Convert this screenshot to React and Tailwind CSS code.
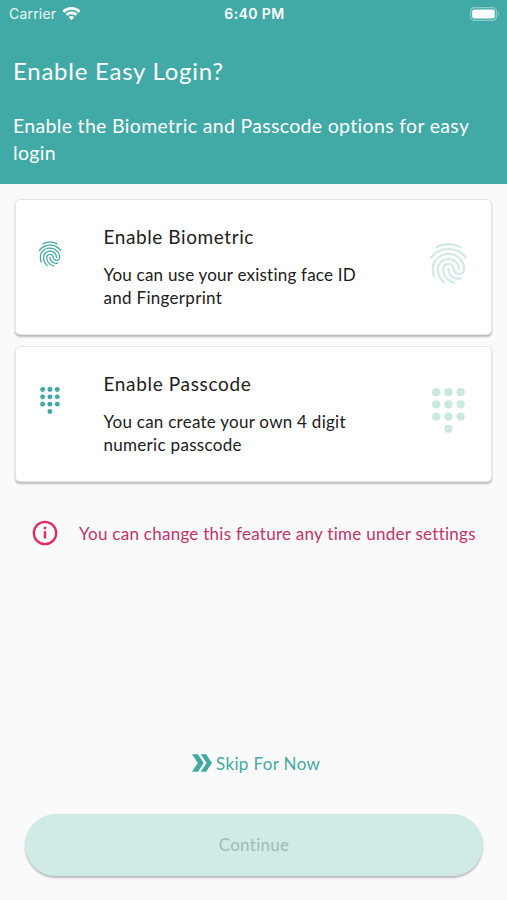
import React from "react";
import { MdFingerprint } from "react-icons/md";

function Wifi() {
  return (
    <svg width="19" height="15" viewBox="0 0 20 15" fill="none" stroke="#fff" strokeWidth="2.8">
      <path d="M1.5 5.6A12 12 0 0 1 18.5 5.6" />
      <path d="M4.8 9A7.4 7.4 0 0 1 15.2 9" />
      <path d="M10 14.5 7.1 11.5A4 4 0 0 1 12.9 11.5Z" fill="#fff" stroke="none" />
    </svg>
  );
}

function Battery() {
  return (
    <svg width="30" height="14" viewBox="0 0 30 14">
      <rect x="0.6" y="0.6" width="25.8" height="12.8" rx="3.6" fill="none" stroke="#fff" strokeOpacity="0.4" strokeWidth="1.2" />
      <rect x="2.2" y="2.4" width="22.6" height="9.2" rx="2" fill="#fff" />
      <path d="M27.8 4.8v4.4c1.6-.8 1.6-3.6 0-4.4Z" fill="#fff" fillOpacity="0.45" />
    </svg>
  );
}

const DOTS = [[0, 0], [1, 0], [2, 0], [0, 1], [1, 1], [2, 1], [0, 2], [1, 2], [2, 2], [1, 3]];

function Keypad({ className }) {
  return (
    <svg className={className} viewBox="0 0 33 45" fill="currentColor">
      {DOTS.map(([x, y]) => (
        <circle key={`${x}-${y}`} cx={4.2 + x * 12.2} cy={4.2 + y * 12.2} r="4.1" />
      ))}
    </svg>
  );
}

function Card({ small, large, title, titleClass, lines }) {
  return (
    <section className="flex h-[136px] rounded-[5px] border border-[#e6e6e6] bg-white shadow-[0_2px_2px_rgba(0,0,0,0.25)]">
      <div className="flex w-[67px] justify-center">{small}</div>
      <div className="flex-1 pt-[24px] pl-[20.5px] text-[#202020]">
        <h2 className={`text-[19px] leading-[26px] whitespace-nowrap ${titleClass}`}>{title}</h2>
        <p className="mt-[13px] text-[17px] leading-[23px] whitespace-nowrap">
          {lines.map((l) => (
            <span key={l.text} className={`block ${l.className}`}>{l.text}</span>
          ))}
        </p>
      </div>
      <div className="flex w-[86px] justify-center">{large}</div>
    </section>
  );
}

export default function App() {
  return (
    <main className="flex h-[900px] w-[507px] flex-col overflow-hidden bg-[#fafafa] font-['Lato',sans-serif]">
      <header className="h-[184px] bg-[#42aaa6] text-white">
        <div className="grid h-[27px] grid-cols-3 items-center pr-[7px] pl-[9px] font-['Inter',sans-serif]">
          <div className="flex items-center gap-[6px] text-[14px]">
            <span className="tracking-[0.2px] text-white/90">Carrier</span>
            <Wifi />
          </div>
          <div className="text-center text-[14px] font-semibold tracking-[0.4px]">6:40 PM</div>
          <div className="flex justify-end"><Battery /></div>
        </div>
        <h1 className="mt-[28px] pl-[13px] text-[24px] leading-[32px] tracking-[0.75px] whitespace-nowrap">Enable Easy Login?</h1>
        <p className="mt-[25px] pl-[13px] text-[19.5px] leading-[27px] tracking-[0.32px] whitespace-nowrap">
          Enable the Biometric and Passcode options for easy
          <br />
          login
        </p>
      </header>

      <div className="flex flex-col gap-[11px] px-[15px] pt-[15px]">
        <Card
          small={<MdFingerprint className="mt-[39px] h-[30px] w-[30px] text-[#3fa9a0]" />}
          large={<MdFingerprint className="mt-[39px] h-[49px] w-[49px] text-[#cfe9e5]" />}
          title="Enable Biometric"
          titleClass="tracking-[0.58px]"
          lines={[
            { text: "You can use your existing face ID", className: "tracking-[0.22px]" },
            { text: "and Fingerprint", className: "tracking-[0.3px]" },
          ]}
        />
        <Card
          small={<Keypad className="mt-[40px] h-[27px] w-[20px] text-[#3fa9a5]" />}
          large={<Keypad className="mt-[41px] h-[45px] w-[33px] text-[#cbe8e1]" />}
          title="Enable Passcode"
          titleClass="tracking-[0.65px]"
          lines={[
            { text: "You can create your own 4 digit", className: "tracking-[0.26px]" },
            { text: "numeric passcode", className: "tracking-[0.3px]" },
          ]}
        />
      </div>

      <div className="mt-[38px] flex h-[26px] items-center pl-[32px] text-[#c2326b]">
        <svg width="26" height="26" viewBox="0 0 26 26" fill="none" stroke="#df2c66">
          <circle cx="13" cy="13" r="11.2" strokeWidth="2.3" />
          <path d="M13 11.3v7.2M13 6.8v2.5" strokeWidth="2.5" />
        </svg>
        <span className="mt-px ml-[21px] text-[17px] tracking-[0.27px] whitespace-nowrap">You can change this feature any time under settings</span>
      </div>

      <div className="mt-[204px] flex h-[26px] items-center pl-[191.5px] text-[#42aaa0]">
        <svg width="20.5" height="18" viewBox="0 0 21 18" fill="currentColor">
          <path d="M0 0H6L12 9 6 18H0L6 9Z" />
          <path d="M9 0H14.5L20.5 9 14.5 18H9L15 9Z" />
        </svg>
        <span className="mt-px ml-[4px] text-[17px] tracking-[0.36px] whitespace-nowrap">Skip For Now</span>
      </div>

      <button className="mr-[24px] ml-[25px] mt-[38px] h-[62px] rounded-full bg-[#d0eae6] text-[17px] tracking-[0.3px] text-[#9dbab6] shadow-[0_2px_2px_rgba(0,0,0,0.25)]">
        Continue
      </button>
    </main>
  );
}
